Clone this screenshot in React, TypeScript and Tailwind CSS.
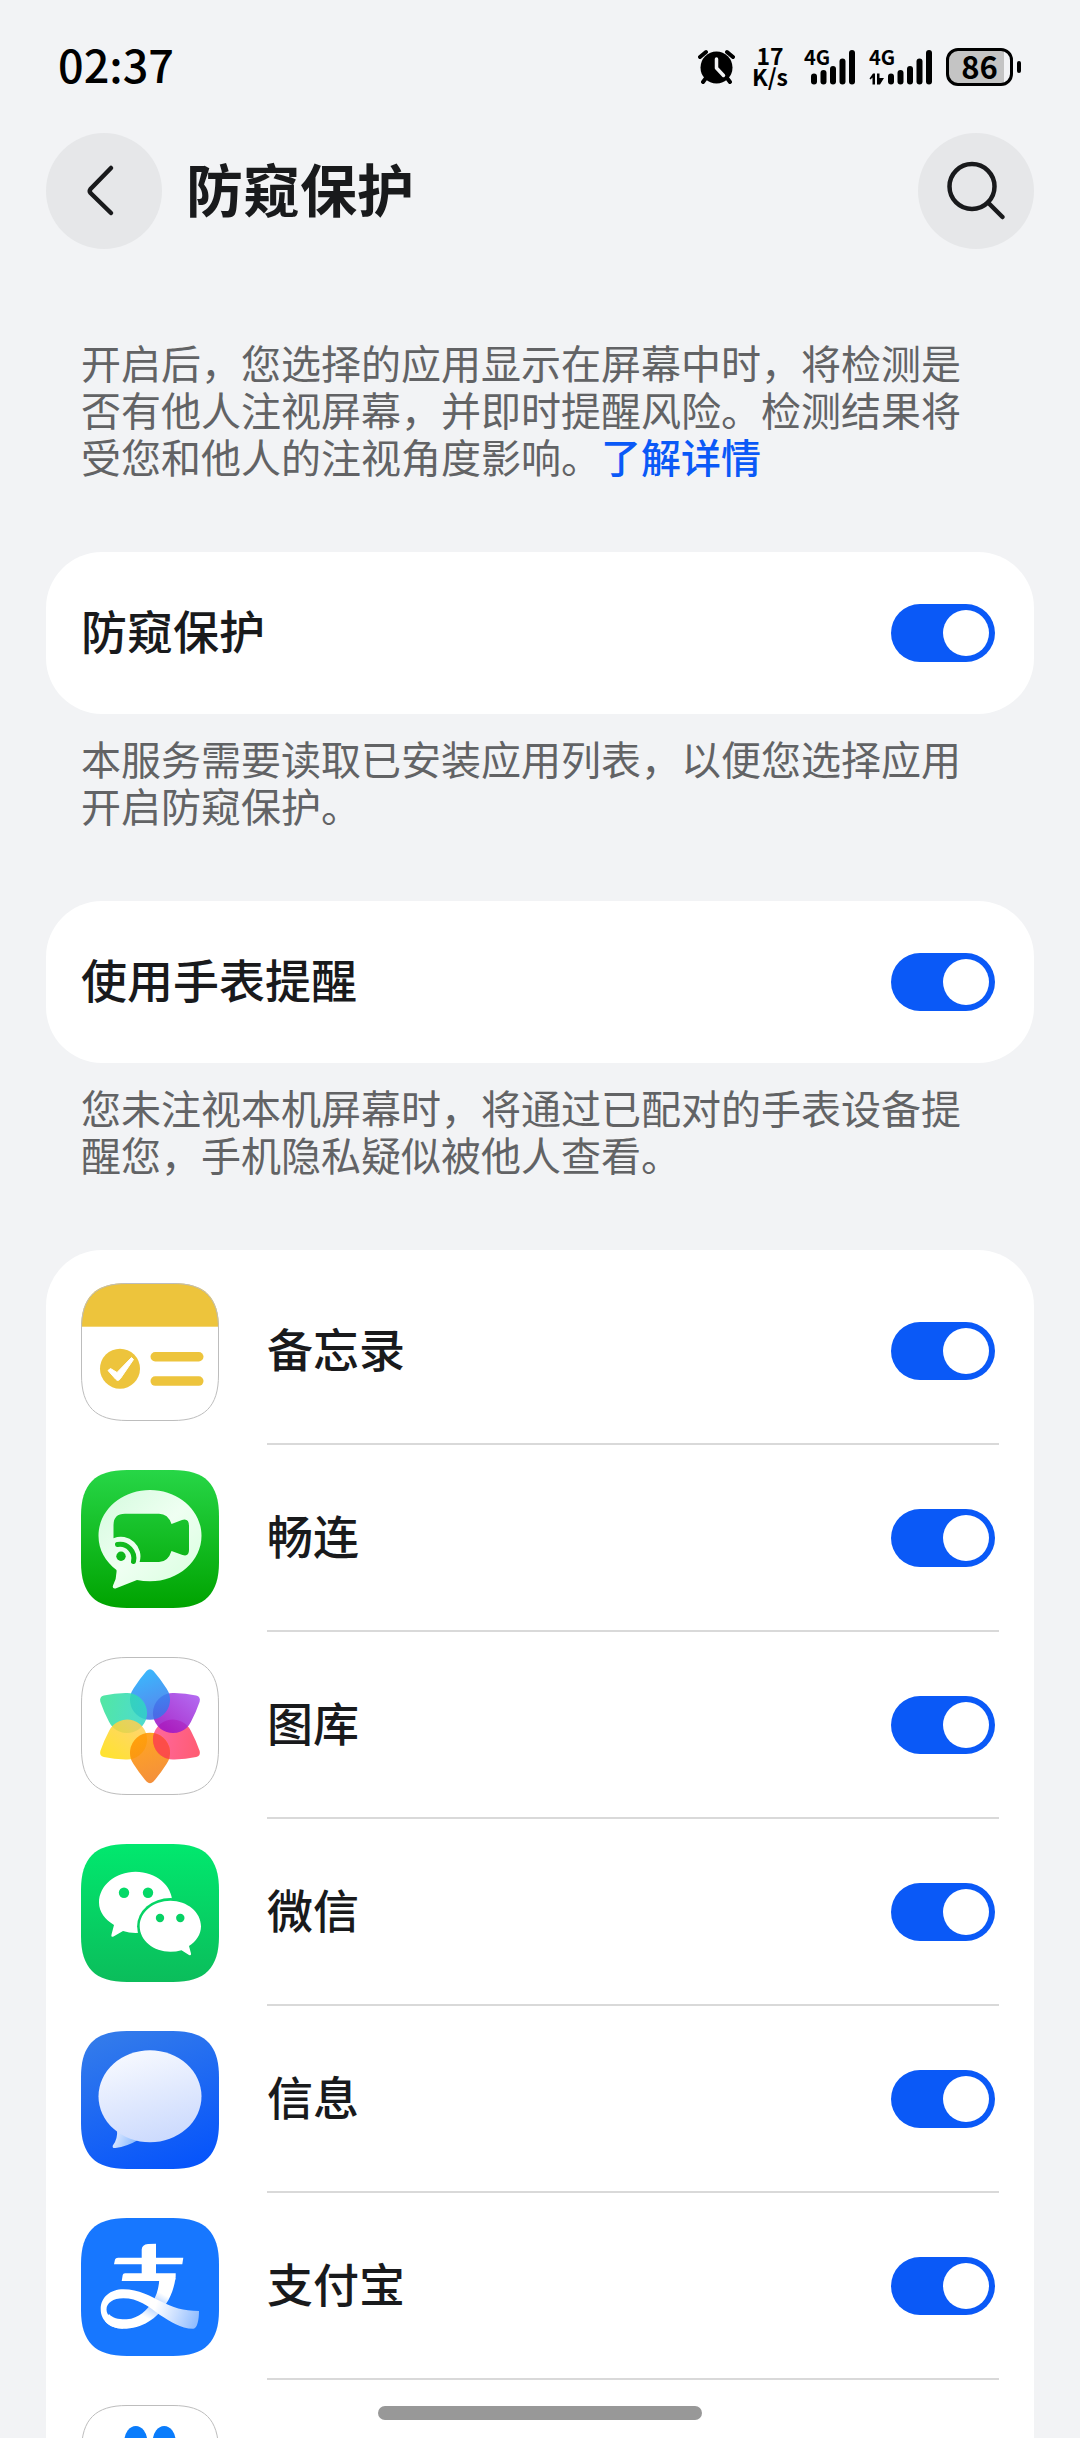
import type { ReactNode } from "react";

const SQUIRCLE =
  "M0 46C0 14 14 0 46 0H92C124 0 138 14 138 46V92C138 124 124 138 92 138H46C14 138 0 124 0 92Z";
const SQUIRCLE_LINE =
  "M.5 46C.5 14.500 14.500 .5 46 .5H92C123.500 .5 137.500 14.500 137.500 46V92C137.500 123.500 123.500 137.500 92 137.500H46C14.500 137.500 .5 123.500 .5 92Z";

function AppIcon({ children }: { children: ReactNode }) {
  return (
    <svg viewBox="0 0 138 138" className="size-[138px] shrink-0" aria-hidden="true">
      {children}
    </svg>
  );
}

function VerticalGradient({ id, from, to, slant = 0 }: { id: string; from: string; to: string; slant?: number }) {
  return (
    <linearGradient id={id} gradientUnits="userSpaceOnUse" x1={69 - slant} y1="0" x2={69 + slant} y2="138">
      <stop offset="0" stopColor={from} />
      <stop offset="1" stopColor={to} />
    </linearGradient>
  );
}

function NotesIcon() {
  return (
    <AppIcon>
      <clipPath id="notes-clip">
        <path d={SQUIRCLE} />
      </clipPath>
      <path d={SQUIRCLE} fill="#fff" />
      <rect width="138" height="43.700" fill="#edc43c" clipPath="url(#notes-clip)" />
      <path d={SQUIRCLE_LINE} fill="none" stroke="#bdbdbd" />
      <circle cx="39" cy="85.700" r="20" fill="#edc43c" />
      <path d="M27 87.500 29.500 85.500 36 89.500 50.500 74.500 52.500 76.500 39.500 95.500Q37 99 34.500 96Z" fill="#fff" stroke="#fff" strokeLinejoin="round" />
      <rect x="69.500" y="69" width="53" height="9.500" rx="4.700" fill="#edc43c" />
      <rect x="69.500" y="93.300" width="53" height="9.500" rx="4.700" fill="#edc43c" />
    </AppIcon>
  );
}

function MeetimeIcon() {
  return (
    <AppIcon>
      <defs>
        <VerticalGradient id="meet-bg" from="#27d647" to="#00a300" />
        <linearGradient id="meet-bubble" x1="0" y1="0" x2="1" y2="1">
          <stop offset="0" stopColor="#d3fbdd" />
          <stop offset=".5" stopColor="#effff2" />
          <stop offset="1" stopColor="#d6ffdd" />
        </linearGradient>
      </defs>
      <path d={SQUIRCLE} fill="url(#meet-bg)" />
      <path
        d="M69 20C97.500 20 120.500 40.500 120.500 65.700S97.500 111.300 69 111.300Q62 111.300 56 110L34.500 118.500Q31 119 32 115.500Q36 108 35.500 100C24.500 91.500 17.500 80 17.500 65.700C17.500 40.500 40.500 20 69 20Z"
        fill="url(#meet-bubble)"
      />
      <path
        d="M32.500 68.300V55Q32.500 43.700 44 43.700H78Q87 43.700 90.500 54L101 50Q108 48 108 56V80Q108 87 101.500 85L90.500 81Q87 92 78 92H58.600A19.500 19.500 0 0 0 32.500 68.300Z"
        fill="url(#meet-bg)"
      />
      <path d="M36.500 74.500A14 14 0 0 1 52.500 91.500" fill="none" stroke="url(#meet-bg)" strokeWidth="5" strokeLinecap="round" />
      <circle cx="40" cy="86.300" r="4.700" fill="url(#meet-bg)" />
    </AppIcon>
  );
}

const PETAL =
  "M65.500 14Q69 10.500 72.500 14Q79.500 22 85.500 31.500A20 20 0 1 1 52.500 31.500Q58.500 22 65.500 14Z";

const PETALS = [
  { id: "petal-red", angle: 120, from: "#ff3f52", to: "#ff4d8a" },
  { id: "petal-violet", angle: 60, from: "#a85af4", to: "#9c14c8" },
  { id: "petal-blue", angle: 0, from: "#16b4ff", to: "#3a74ea" },
  { id: "petal-green", angle: -60, from: "#36e58c", to: "#30d6c4" },
  { id: "petal-yellow", angle: -120, from: "#ffe100", to: "#ffcf50" },
  { id: "petal-orange", angle: 180, from: "#f07a20", to: "#ff9500" },
];

function GalleryIcon() {
  return (
    <AppIcon>
      <path d={SQUIRCLE} fill="#fff" />
      <path d={SQUIRCLE_LINE} fill="none" stroke="#bdbdbd" />
      {PETALS.map((petal) => (
        <g key={petal.id} transform={`rotate(${petal.angle} 69 69.300)`}>
          <linearGradient id={petal.id} x1="0" y1="0" x2=".3" y2="1">
            <stop offset="0" stopColor={petal.from} />
            <stop offset="1" stopColor={petal.to} />
          </linearGradient>
          <path d={PETAL} fill={`url(#${petal.id})`} fillOpacity=".86" />
        </g>
      ))}
      {/* The red petal lies over the orange one, which closes the ring. */}
      <clipPath id="petal-overlap">
        <path d={PETAL} transform="rotate(180 69 69.300)" />
      </clipPath>
      <g clipPath="url(#petal-overlap)">
        <path d={PETAL} transform="rotate(120 69 69.300)" fill="#fb4450" fillOpacity=".86" />
      </g>
    </AppIcon>
  );
}

function WeChatIcon() {
  return (
    <AppIcon>
      <defs>
        <VerticalGradient id="wechat-bg" from="#01e86e" to="#0bbd5b" />
      </defs>
      <path d={SQUIRCLE} fill="url(#wechat-bg)" />
      <path
        d="M54.600 27.700C75 27.700 91.300 41.500 91.300 58.500S75 89 54.600 89Q48 89 42 87L32.500 92.500Q29.500 93.500 30.500 90.500L33 81C24 75.500 18 68 18 58.500C18 41.500 34.500 27.700 54.600 27.700Z"
        fill="#fff"
      />
      <circle cx="43" cy="48.700" r="5.200" fill="url(#wechat-bg)" />
      <circle cx="67" cy="48.700" r="5.200" fill="url(#wechat-bg)" />
      <ellipse cx="89.400" cy="82.200" rx="33.300" ry="28.200" fill="url(#wechat-bg)" />
      <path
        d="M89.400 56.700C106.300 56.700 120 68.200 120 82.200C120 90.500 115 97.500 108 102L110 109.500Q110.500 112 108 111L100.500 106.200Q95 107.700 89.400 107.700C72.500 107.700 58.700 96.300 58.700 82.200S72.500 56.700 89.400 56.700Z"
        fill="#fff"
      />
      <circle cx="79" cy="74" r="4.200" fill="url(#wechat-bg)" />
      <circle cx="99.300" cy="74" r="4.200" fill="url(#wechat-bg)" />
    </AppIcon>
  );
}

function MessagesIcon() {
  return (
    <AppIcon>
      <defs>
        <VerticalGradient id="msg-bg" from="#327aeb" to="#0755fb" slant={25} />
        <VerticalGradient id="msg-bubble" from="#ffffff" to="#bfd1fd" slant={20} />
        <linearGradient id="msg-tail" x1="0" y1="0" x2="1" y2=".3">
          <stop offset=".2" stopColor="#d9e6ff" />
          <stop offset="1" stopColor="#8dbcff" />
        </linearGradient>
      </defs>
      <path d={SQUIRCLE} fill="url(#msg-bg)" />
      <path d="M36 98Q37 108 31.800 114.500Q31 117.500 34.500 117Q46 115.500 57 109Z" fill="url(#msg-tail)" />
      <ellipse cx="69" cy="65.300" rx="51.500" ry="46" fill="url(#msg-bubble)" />
    </AppIcon>
  );
}

function AlipayIcon() {
  return (
    <AppIcon>
      <defs>
        <linearGradient id="alipay-tail" gradientUnits="userSpaceOnUse" x1="76" y1="84" x2="118" y2="100">
          <stop offset="0" stopColor="#fff" />
          <stop offset=".5" stopColor="#c9deff" />
          <stop offset="1" stopColor="#8fbcff" />
        </linearGradient>
        <linearGradient id="alipay-leg" gradientUnits="userSpaceOnUse" x1="86" y1="60" x2="60" y2="106">
          <stop offset="0" stopColor="#fff" />
          <stop offset=".3" stopColor="#fff" />
          <stop offset=".55" stopColor="#a9cbff" />
          <stop offset=".85" stopColor="#fff" />
        </linearGradient>
      </defs>
      <path d={SQUIRCLE} fill="#1777ff" />
      <path d="M60.700 31.500Q61 26.500 67 26L75 25.700V39.700H102.300L101.300 46.300H75V55.300H94.700Q95 59 94 63H40.700L41.700 57Q42 55.300 44 55.300H60.700V46.300H33L34 41.500Q34.500 39.700 37 39.700H60.700Z" fill="#fff" />
      <path
        d="M94.500 60C93 71 89 80 85.700 84.700C76 101 61 110.700 42.300 110.700C34 110.700 28 108 24 103L28 96C32 100.500 38 101.500 45.700 101.300C58 100.500 66 92 72.300 83C76 76 78 69 78.300 61Z"
        fill="url(#alipay-leg)"
      />
      <path
        d="M42.300 110.700C28 110.500 19.700 102 19.700 91.300C19.700 79 29.500 71.300 42.300 71.300C58 71.300 70 78.500 79 83C92 89.500 102 93 118 93C118 101 116.500 110.700 112.300 110.700C99 110.700 90 103.500 79 97C67 88 57 80.300 42.300 80.300C32 80.300 25.500 85 25.500 91.500C25.500 99 33 102 42 102Q38 107 42.300 110.700Z"
        fill="url(#alipay-tail)"
      />
    </AppIcon>
  );
}

function PawIcon() {
  return (
    <AppIcon>
      <path d={SQUIRCLE} fill="#fff" />
      <path d={SQUIRCLE_LINE} fill="none" stroke="#bdbdbd" />
      <g fill="#0a7cfb">
        <ellipse cx="54.800" cy="36.500" rx="11.500" ry="15.500" />
        <ellipse cx="83.200" cy="36.500" rx="11.500" ry="15.500" />
        <ellipse cx="32" cy="62" rx="10.500" ry="14" />
        <ellipse cx="106" cy="62" rx="10.500" ry="14" />
        <path d="M69 60C82 60 87 74 96 83C106 94 101 114 84 113Q69 110 54 113C37 114 32 94 42 83C51 74 56 60 69 60Z" />
      </g>
    </AppIcon>
  );
}

const APPS = [
  { id: "app-notes", name: "备忘录", icon: <NotesIcon /> },
  { id: "app-meetime", name: "畅连", icon: <MeetimeIcon /> },
  { id: "app-gallery", name: "图库", icon: <GalleryIcon /> },
  { id: "app-wechat", name: "微信", icon: <WeChatIcon /> },
  { id: "app-messages", name: "信息", icon: <MessagesIcon /> },
  { id: "app-alipay", name: "支付宝", icon: <AlipayIcon /> },
  { id: "app-more", name: "", icon: <PawIcon /> },
];

function Switch({ id, label }: { id: string; label?: string }) {
  return (
    <input
      id={id}
      type="checkbox"
      role="switch"
      aria-label={label}
      defaultChecked
      className="flex h-[58px] w-[104px] shrink-0 cursor-pointer appearance-none rounded-full bg-[#d5d6d8] p-1.5 before:size-[46px] before:rounded-full before:bg-white checked:justify-end checked:bg-[#0a59f7]"
    />
  );
}

function SettingCard({ id, label, note }: { id: string; label: string; note: string }) {
  return (
    <section className="mb-[72px]">
      <div className="flex h-[162px] items-center justify-between rounded-[56px] bg-white pr-[39px] pl-[35px]">
        <label htmlFor={id} className="pb-2 text-[46px] leading-[60px] font-medium">
          {label}
        </label>
        <Switch id={id} />
      </div>
      <p className="mt-[21px] pr-[60px] pl-[35px] text-[40px] leading-[47px] text-[#626365]">{note}</p>
    </section>
  );
}

function AlarmIcon() {
  return (
    <svg viewBox="0 0 37 36" className="h-9 w-[37px]" aria-label="闹钟">
      <circle cx="18.500" cy="18.500" r="16" />
      <path d="M2 8 8 3M35 8 29 3M8 29 5 33M29 29 32 33" stroke="#000" strokeWidth="4" strokeLinecap="round" />
      <path d="M18.500 10V19L25.500 26.500" fill="none" stroke="#f2f3f5" strokeWidth="3.500" strokeLinecap="round" strokeLinejoin="round" />
    </svg>
  );
}

function Signal({ active = false }: { active?: boolean }) {
  const x = active ? 19 : 7;
  return (
    <div className="relative">
      <svg viewBox={active ? "0 0 63 36" : "0 0 51 36"} className={active ? "h-9 w-[63px]" : "h-9 w-[51px]"} aria-hidden="true">
        <rect x={x} y="24.500" width="6" height="11" rx="3" />
        <rect x={x + 9.500} y="21" width="6" height="14.500" rx="3" />
        <rect x={x + 19} y="17" width="6" height="18.500" rx="3" />
        <rect x={x + 28.500} y="9.500" width="6" height="26" rx="3" />
        <rect x={x + 38} y="1" width="6" height="34.500" rx="3" />
        {active && <path d="M.5 29.500 4 24.500H6V35.500H3.500V28.500L1.500 30.500ZM8 24.500H10.500V29H15L11 35.500H8Z" />}
      </svg>
      <span className="absolute top-0 left-0 text-xl leading-4 font-bold">4G</span>
    </div>
  );
}

function StatusBar() {
  return (
    <div className="flex h-[133px] shrink-0 items-center justify-between pr-[59px] pl-[58px] text-black">
      <time className="pb-1.5 text-[45px] leading-[60px] font-medium">02:37</time>
      <div className="flex items-center">
        <AlarmIcon />
        <div className="ml-[17px] pb-0.5 text-center text-[23px] leading-[21px] font-bold">
          <div>17</div>
          <div>K/s</div>
        </div>
        <div className="ml-4">
          <Signal />
        </div>
        <div className="ml-3.5">
          <Signal active />
        </div>
        <div className="ml-3.5 flex items-center gap-1">
          <div className="flex h-[38px] w-[67px] items-center justify-center rounded-xl border-3 border-black bg-linear-to-r from-[#c4c4c4] from-90% to-transparent to-90% pb-0.5 text-[31px] leading-8 font-bold">
            86
          </div>
          <div className="h-3 w-1 rounded-sm bg-black" />
        </div>
      </div>
    </div>
  );
}

function Header() {
  return (
    <header className="flex shrink-0 items-center px-[46px]">
      <button type="button" aria-label="返回" className="flex size-[116px] items-center justify-center rounded-full bg-[#e6e7e9]">
        <svg viewBox="0 0 116 116" className="size-full" fill="none" stroke="#191a1c" strokeWidth="4.500" strokeLinecap="round" strokeLinejoin="round" aria-hidden="true">
          <path d="M65 35 44.500 56Q43 58 44.500 60L65 80" />
        </svg>
      </button>
      <h1 className="ml-6 flex-1 pb-2 text-[57px] leading-[80px] font-bold">防窥保护</h1>
      <button type="button" aria-label="搜索" className="flex size-[116px] items-center justify-center rounded-full bg-[#e6e7e9]">
        <svg viewBox="0 0 116 116" className="size-full" fill="none" stroke="#191a1c" strokeWidth="4.500" strokeLinecap="round" aria-hidden="true">
          <circle cx="54" cy="53.500" r="22.500" />
          <path d="M70 69.500 84.500 84" />
        </svg>
      </button>
    </header>
  );
}

export default function App() {
  return (
    <div
      lang="zh-CN"
      className="flex h-screen flex-col overflow-hidden bg-[#f2f3f5] font-['Noto_Sans_CJK_SC',sans-serif] text-[#191a1c]"
    >
      <StatusBar />
      <Header />
      <main className="min-h-0 flex-1 overflow-y-auto px-[46px] pt-[90px] [scrollbar-width:none]">
        <p className="mb-[72px] pr-[60px] pl-[35px] text-[40px] leading-[47px] text-[#626365]">
          开启后，您选择的应用显示在屏幕中时，将检测是否有他人注视屏幕，并即时提醒风险。检测结果将受您和他人的注视角度影响。
          <a href="#details" className="font-medium text-[#0a59f7]">
            了解详情
          </a>
        </p>
        <SettingCard id="peek" label="防窥保护" note="本服务需要读取已安装应用列表，以便您选择应用开启防窥保护。" />
        <SettingCard id="watch" label="使用手表提醒" note="您未注视本机屏幕时，将通过已配对的手表设备提醒您，手机隐私疑似被他人查看。" />
        <ul className="rounded-t-[56px] bg-white px-[35px] pt-2">
          {APPS.map((app) => (
            <li key={app.id} className="flex h-[187px] items-center gap-12">
              {app.icon}
              <div className="flex h-full flex-1 items-center justify-between border-b-2 border-[#d9d9d9] pr-1">
                <label htmlFor={app.id} className="pb-2 text-[46px] leading-[60px] font-medium">
                  {app.name}
                </label>
                <Switch id={app.id} label={app.name ? undefined : "应用"} />
              </div>
            </li>
          ))}
        </ul>
      </main>
      <div className="fixed bottom-[18px] left-1/2 h-3.5 w-[30%] -translate-x-1/2 rounded-full bg-[#989898]" />
    </div>
  );
}
